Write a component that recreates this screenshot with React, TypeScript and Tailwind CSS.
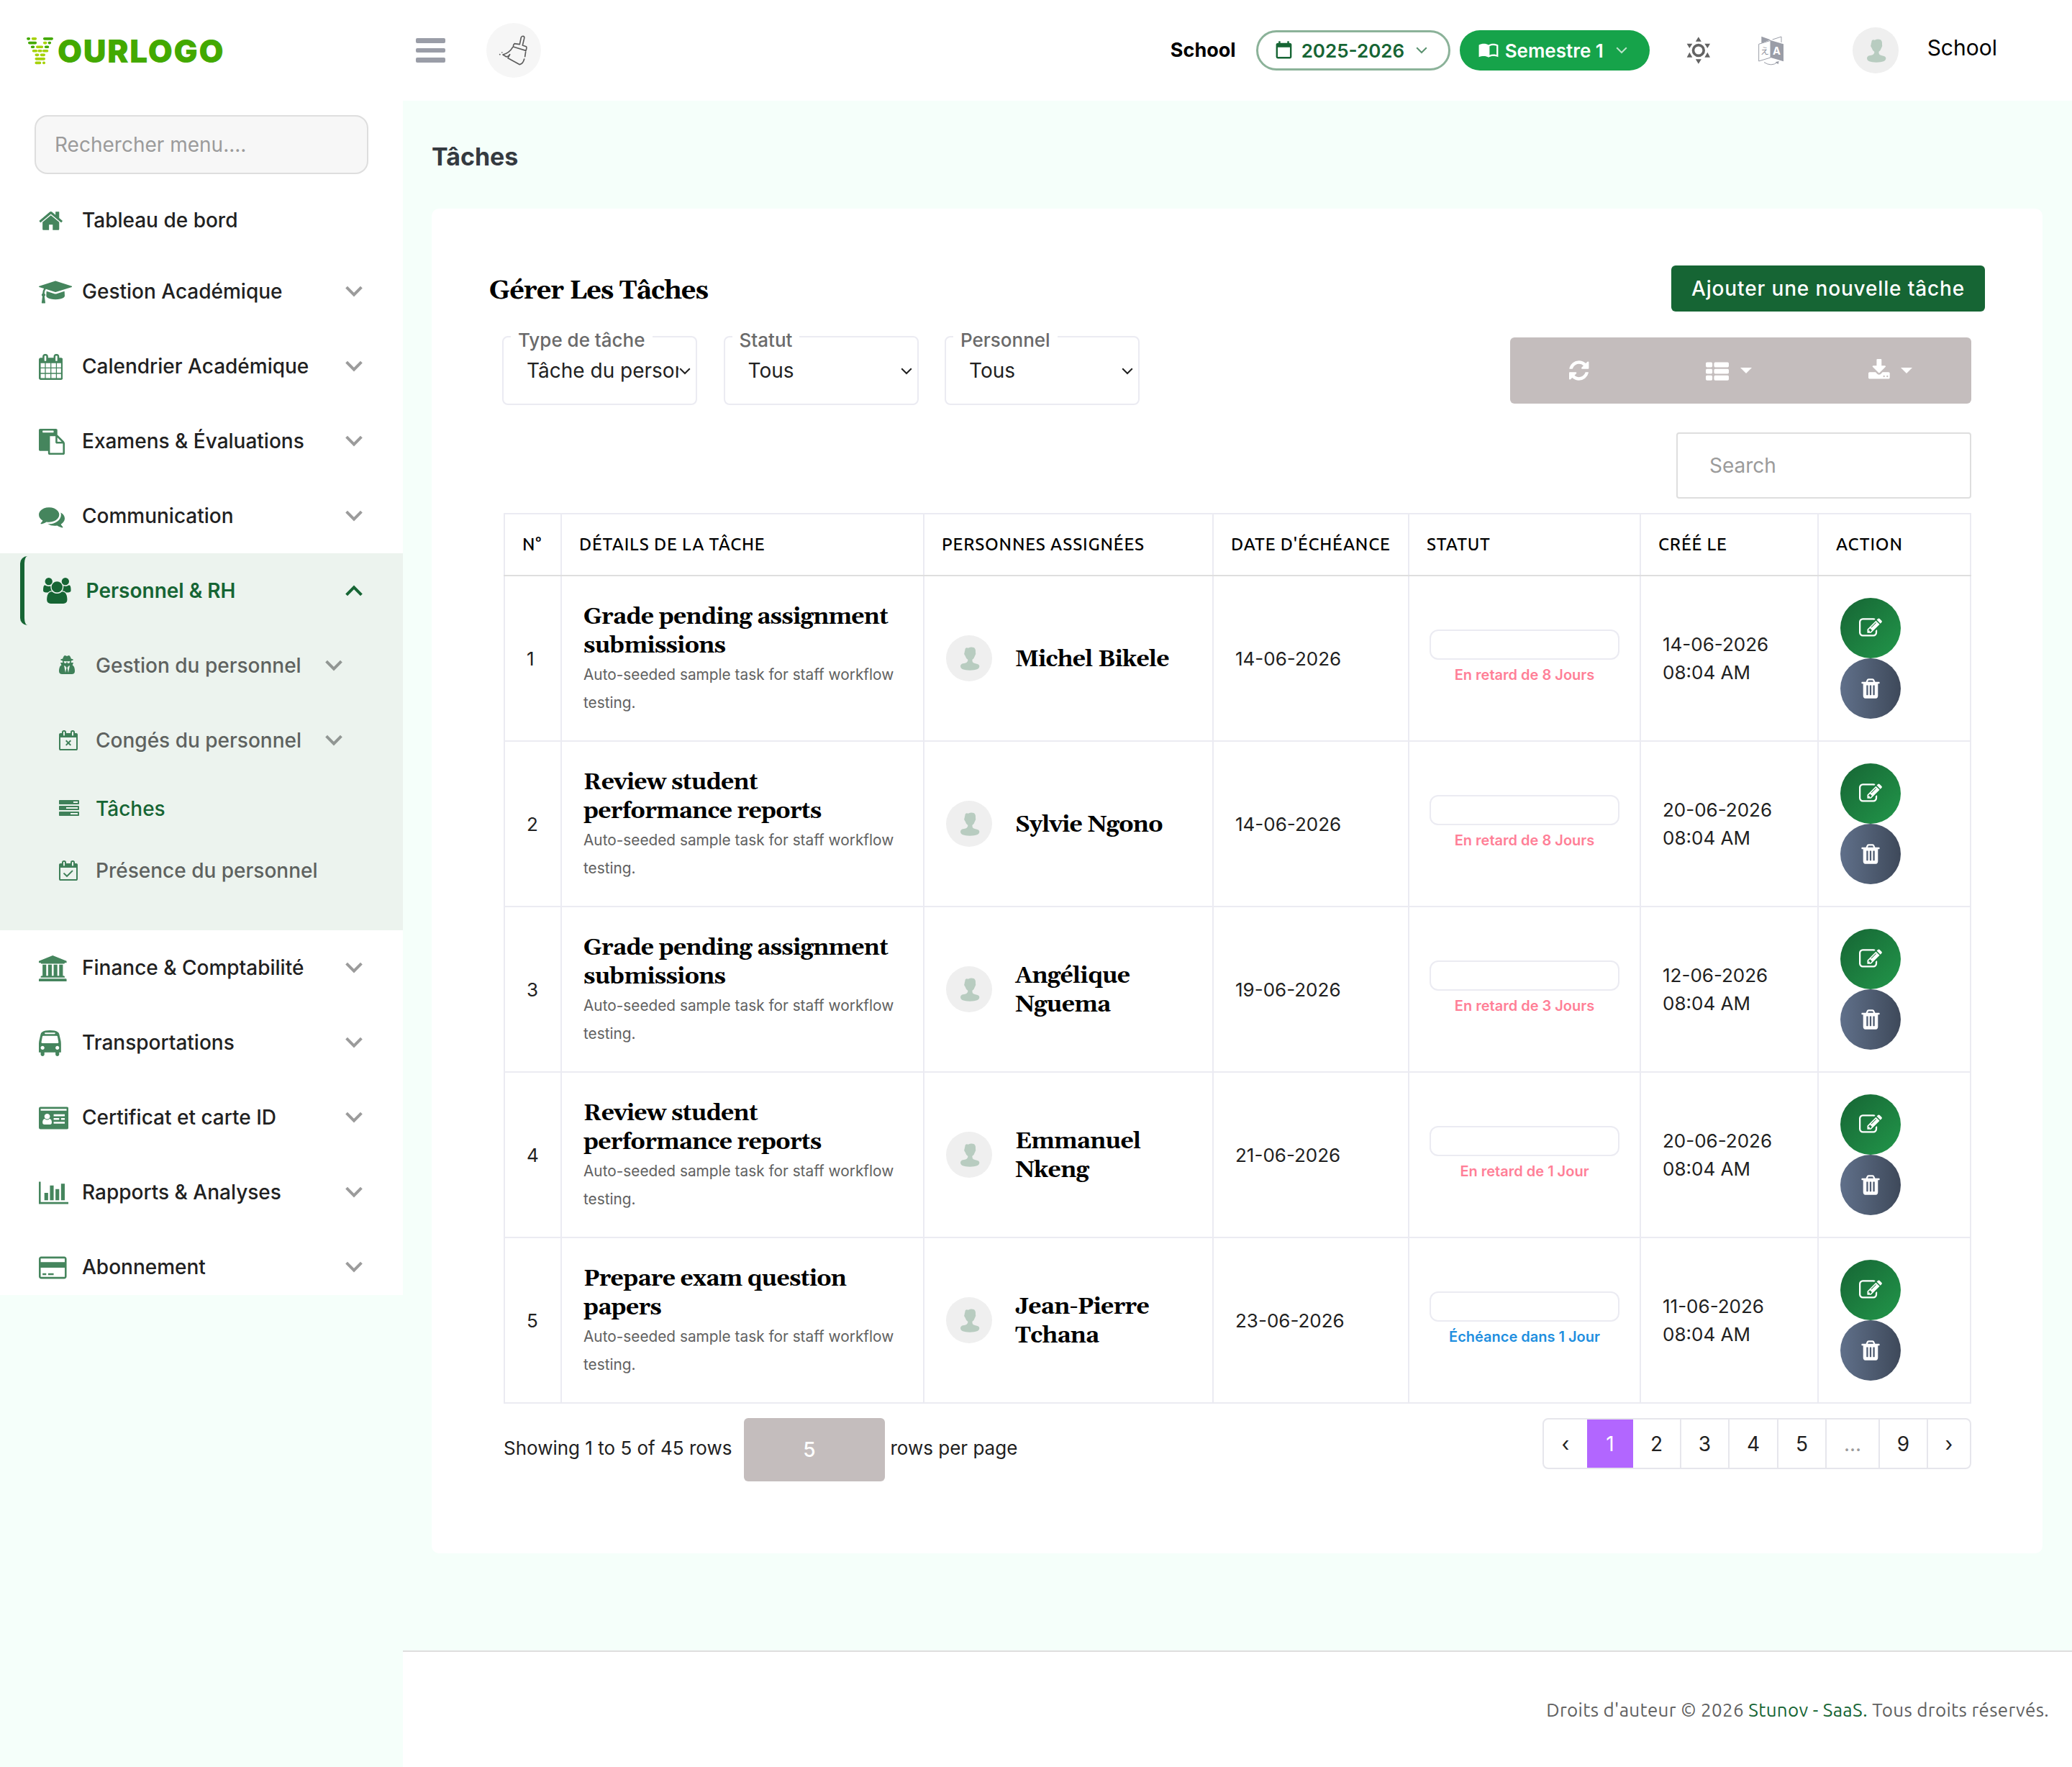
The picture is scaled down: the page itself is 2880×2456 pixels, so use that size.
import React from 'react';

const FRAME =
  'M192 1664h1408v-1024h-1408v1024zm384-1216v-288q0-14-9-23t-23-9h-64q-14 0-23 9t-9 23v288q0 14 9 23t23 9h64q14 0 23-9t9-23zm768 0v-288q0-14-9-23t-23-9h-64q-14 0-23 9t-9 23v288q0 14 9 23t23 9h64q14 0 23-9t9-23zm384-64v1280q0 52-38 90t-90 38h-1408q-52 0-90-38t-38-90v-1280q0-52 38-90t90-38h128v-96q0-66 47-113t113-47h64q66 0 113 47t47 113v96h384v-96q0-66 47-113t113-47h64q66 0 113 47t47 113v96h128q52 0 90 38t38 90z';

// [viewBox x, viewBox width, path]
const icons: Record<string, [number, number, string]> = {
  home: [64, 1664, 'M1472 992v480q0 26-19 45t-45 19h-384v-384h-256v384h-384q-26 0-45-19t-19-45v-480q0-1 .5-3t.5-3l575-474 575 474q1 2 1 6zm223-69l-62 74q-8 9-21 11h-3q-13 0-21-7l-692-577-692 577q-12 8-24 7-13-2-21-11l-62-74q-8-10-7-23.5t11-21.5l719-599q32-26 76-26t76 26l244 204v-195q0-14 9-23t23-9h192q14 0 23 9t9 23v408l219 182q10 8 11 21.5t-7 23.5z'],
  cap: [0, 2304, 'M1774 836l18 316q4 69-82 128t-235 93.5-323 34.5-323-34.5-235-93.5-82-128l18-316 574 181q22 7 48 7t48-7zm530-324q0 23-22 31l-1120 352q-4 1-10 1t-10-1l-652-206q-43 34-71 111.5t-34 178.5q63 36 63 109 0 69-58 107l58 433q2 14-8 25-9 11-24 11h-192q-15 0-24-11-10-11-8-25l58-433q-58-38-58-107 0-73 65-111 11-207 98-330l-333-104q-22-8-22-31t22-31l1120-352q4-1 10-1t10 1l1120 352q22 8 22 31z'],
  calendar: [64, 1664, 'M192 1664h288v-288h-288v288zm352 0h320v-288h-320v288zm-352-352h288v-320h-288v320zm352 0h320v-320h-320v320zm-352-384h288v-288h-288v288zm736 736h320v-288h-320v288zm-384-736h320v-288h-320v288zm768 736h288v-288h-288v288zm-384-352h320v-320h-320v320zm-352-864v-288q0-13-9.5-22.5t-22.5-9.5h-64q-13 0-22.5 9.5t-9.5 22.5v288q0 13 9.5 22.5t22.5 9.5h64q13 0 22.5-9.5t9.5-22.5zm736 864h288v-320h-288v320zm-384-384h320v-288h-320v288zm384 0h288v-288h-288v288zm32-480v-288q0-13-9.5-22.5t-22.5-9.5h-64q-13 0-22.5 9.5t-9.5 22.5v288q0 13 9.5 22.5t22.5 9.5h64q13 0 22.5-9.5t9.5-22.5zm384-64v1280q0 52-38 90t-90 38h-1408q-52 0-90-38t-38-90v-1280q0-52 38-90t90-38h128v-96q0-66 47-113t113-47h64q66 0 113 47t47 113v96h384v-96q0-66 47-113t113-47h64q66 0 113 47t47 113v96h128q52 0 90 38t38 90z'],
  paste: [0, 1792, 'M768 1664h896v-640h-416q-40 0-68-28t-28-68v-416h-384v1152zm256-1440v-64q0-13-9.5-22.5t-22.5-9.5h-704q-13 0-22.5 9.5t-9.5 22.5v64q0 13 9.5 22.5t22.5 9.5h704q13 0 22.5-9.5t9.5-22.5zm256 672h299l-299-299v299zm512 128v672q0 40-28 68t-68 28h-960q-40 0-68-28t-28-68v-160h-544q-40 0-68-28t-28-68v-1344q0-40 28-68t68-28h1088q40 0 68 28t28 68v328q21 13 36 28l408 408q28 28 48 76t20 88z'],
  comments: [0, 1792, 'M1408 768q0 139-94 257t-256.5 186.5-353.5 68.5q-86 0-176-16-124 88-278 128-36 9-86 16h-3q-11 0-20.5-8t-11.5-21q-1-3-1-6.5t.5-6.5 2-6l2.5-5t3.5-5.5 4-5 4.5-5 4-4.5q5-6 23-25t26-29.5 22.5-29 25-38.5 20.5-44q-124-72-195-177t-71-224q0-139 94-257t256.5-186.5 353.5-68.5 353.5 68.5 256.5 186.5 94 257zm384 256q0 120-71 224.5t-195 176.5q10 24 20.5 44t25 38.5 22.5 29 26 29.5 23 25q1 1 4 4.5t4.5 5 4 5 3.5 5.5l2.5 5t2 6 .5 6.5-1 6.5q-3 14-13 22t-22 7q-50-7-86-16-154-40-278-128-90 16-176 16-271 0-472-132 58 4 88 4 161 0 309-45t264-129q125-92 192-212t67-254q0-77-23-152 129 71 204 178t75 230z'],
  users: [0, 1920, 'M593 896q-162 5-265 128h-134q-82 0-138-40.5t-56-118.5q0-353 124-353 6 0 43.5 21t97.5 42.5 119 21.5q67 0 133-23-5 37-5 66 0 143 81 264zm1071 637q0 120-73 189.5t-194 69.5h-874q-121 0-194-69.5t-73-189.5q0-53 3.5-103.5t14-109 26.5-108.5 43-97.5 62-81 85.5-53.5 111.5-20q10 0 43 21.5t73 48 107 48 135 21.5 135-21.5 107-48 73-48 43-21.5q61 0 111.5 20t85.5 53.5 62 81 43 97.5 26.5 108.5 14 109 3.5 103.5zm-1024-1277q0 106-75 181t-181 75-181-75-75-181 75-181 181-75 181 75 75 181zm704 384q0 159-112.5 271.5t-271.5 112.5-271.5-112.5-112.5-271.5 112.5-271.5 271.5-112.5 271.5 112.5 112.5 271.5zm576 225q0 78-56 118.5t-138 40.5h-134q-103-123-265-128 81-121 81-264 0-29-5-66 66 23 133 23 59 0 119-21.5t97.5-42.5 43.5-21q124 0 124 353zm-128-609q0 106-75 181t-181 75-181-75-75-181 75-181 181-75 181 75 75 181z'],
  secret: [0, 1408, 'M576 1536l96-448-96-128-128-64zm256 0l128-640-128 64-96 128zm160-1010q-2-4-4-6-10-8-96-8-70 0-167 19-7 2-21 2t-21-2q-97-19-167-19-86 0-96 8-2 2-4 6 2 18 4 27 2 3 7.5 6.5t7.5 10.5q2 4 7.5 20.5t7 20.5 7.5 17 8.5 17 9 14 12 13.5 14 9.5 17.5 8 20.5 4 24.5 2q36 0 59-12.5t32.5-30 14.5-34.5 11.5-29.5 17.5-12.5h12q11 0 17.5 12.5t11.5 29.5 14.5 34.5 32.5 30 59 12.5q13 0 24.5-2t20.5-4 17.5-8 14-9.5 12-13.5 9-14 8.5-17 7.5-17 7-20.5 7.5-20.5q2-7 7.5-10.5t7.5-6.5q2-9 4-27zm416 879q0 121-73 190t-194 69h-874q-121 0-194-69t-73-190q0-61 4.5-118t19-125.5 37.5-123.5 63.5-103.5 93.5-74.5l-90-220h214q-22-64-22-128 0-12 2-32-194-40-194-96 0-57 210-99 17-62 51.5-134t70.5-114q32-37 76-37 30 0 84 31t84 31 84-31 84-31q44 0 76 37 36 42 70.5 114t51.5 134q210 42 210 99 0 56-194 96 7 81-20 160h214l-82 225q63 33 107.5 96.5t65.5 143.5 29 151.5 8 148.5z'],
  leave: [64, 1664, FRAME + 'M730 870l166 166 166-166 90 90-166 166 166 166-90 90-166-166-166 166-90-90 166-166-166-166z'],
  presence: [64, 1664, FRAME + 'M1303 964l-512 512q-10 9-23 9t-23-9l-288-288q-9-10-9-23t9-22l46-46q9-9 22-9t23 9l220 220 444-444q10-9 23-9t22 9l46 46q9 9 9 22t-9 23z'],
  tasks: [0, 1792, 'M1024 1408h640v-128h-640v128zm-384-512h1024v-128h-1024v128zm640-512h384v-128h-384v128zm512 832v256q0 26-19 45t-45 19h-1664q-26 0-45-19t-19-45v-256q0-26 19-45t45-19h1664q26 0 45 19t19 45zm0-512v256q0 26-19 45t-45 19h-1664q-26 0-45-19t-19-45v-256q0-26 19-45t45-19h1664q26 0 45 19t19 45zm0-512v256q0 26-19 45t-45 19h-1664q-26 0-45-19t-19-45v-256q0-26 19-45t45-19h1664q26 0 45 19t19 45z'],
  bank: [0, 1920, 'M960 0l960 384v128h-128q0 26-20.5 45t-48.5 19h-1526q-28 0-48.5-19t-20.5-45h-128v-128zm-704 640h256v768h128v-768h256v768h128v-768h256v768h128v-768h256v768h59q28 0 48.5 19t20.5 45v64h-1664v-64q0-26 20.5-45t48.5-19h59v-768zm1595 960q28 0 48.5 19t20.5 45v128h-1920v-128q0-26 20.5-45t48.5-19h1782z'],
  bus: [0, 1536, 'M384 1216q0-53-37.5-90.5t-90.5-37.5-90.5 37.5-37.5 90.5 37.5 90.5 90.5 37.5 90.5-37.5 37.5-90.5zm1024 0q0-53-37.5-90.5t-90.5-37.5-90.5 37.5-37.5 90.5 37.5 90.5 90.5 37.5 90.5-37.5 37.5-90.5zm-46-396l-72-384q-5-23-22.5-37.5t-40.5-14.5h-918q-23 0-40.5 14.5t-22.5 37.5l-72 384q-5 30 14 53t49 23h1062q30 0 49-23t14-53zm-226-612q0-20-14-34t-34-14h-640q-20 0-34 14t-14 34 14 34 34 14h640q20 0 34-14t14-34zm400 725v603h-128v128q0 53-37.5 90.5t-90.5 37.5-90.5-37.5-37.5-90.5v-128h-768v128q0 53-37.5 90.5t-90.5 37.5-90.5-37.5-37.5-90.5v-128h-128v-603q0-112 25-223l103-454q9-78 97.5-137t230-89 312.5-30 312.5 30 230 89 97.5 137l105 454q23 102 23 223z'],
  idcard: [0, 2048, 'M112 128h1824q112 0 112 112v1312q0 112-112 112h-1824q-112 0-112-112v-1312q0-112 112-112zM128 256v128h1792v-128zM1024 640v128h768v-128zM1024 896v128h384v-128zM1536 896v128h256v-128zM1024 1152v128h768v-128zM576 592q-80 0-137 56t-57 136 57 136 137 56 137-56 57-136-57-136-137-56zM420 944q-164 20-164 250 0 150 130 150h380q130 0 130-150 0-230-164-250-60 80-156 80t-156-80z'],
  chart: [0, 2048, 'M640 896v512h-256v-512h256zm384-512v1024h-256v-1024h256zm1024 1152v128h-2048v-1536h128v1408h1920zm-640-896v768h-256v-768h256zm384-384v1152h-256v-1152h256z'],
  card: [0, 1920, 'M1760 128q66 0 113 47t47 113v1216q0 66-47 113t-113 47h-1600q-66 0-113-47t-47-113v-1216q0-66 47-113t113-47h1600zm-1600 128q-13 0-22.5 9.5t-9.5 22.5v224h1664v-224q0-13-9.5-22.5t-22.5-9.5h-1600zm1600 1280q13 0 22.5-9.5t9.5-22.5v-608h-1664v608q0 13 9.5 22.5t22.5 9.5h1600zm-1504-128v-128h256v128h-256zm384 0v-128h384v128h-384z'],
  edit: [0, 1792, 'M888 1184l116-116-152-152-116 116v56h96v96h56zm440-720q-16-16-33 1l-350 350q-17 17-1 33t33-1l350-350q17-17 1-33zm80 594v190q0 119-84.5 203.5t-203.5 84.5h-832q-119 0-203.5-84.5t-84.5-203.5v-832q0-119 84.5-203.5t203.5-84.5h832q63 0 117 25 15 7 18 23 3 17-9 29l-49 49q-14 14-32 8-23-6-45-6h-832q-66 0-113 47t-47 113v832q0 66 47 113t113 47h832q66 0 113-47t47-113v-126q0-13 9-22l64-64q15-15 35-7t20 29zm-96-738l288 288-672 672h-288v-288zm444 132l-92 92-288-288 92-92q28-28 68-28t68 28l152 152q28 28 28 68t-28 68z'],
  trash: [0, 1792, 'M704 1376v-704q0-14-9-23t-23-9h-64q-14 0-23 9t-9 23v704q0 14 9 23t23 9h64q14 0 23-9t9-23zm256 0v-704q0-14-9-23t-23-9h-64q-14 0-23 9t-9 23v704q0 14 9 23t23 9h64q14 0 23-9t9-23zm256 0v-704q0-14-9-23t-23-9h-64q-14 0-23 9t-9 23v704q0 14 9 23t23 9h64q14 0 23-9t9-23zm-544-992h448l-48-117q-7-9-17-11h-317q-10 2-17 11zm928 32v64q0 14-9 23t-23 9h-96v948q0 83-47 143.5t-113 60.5h-832q-66 0-113-58.5t-47-141.5v-952h-96q-14 0-23-9t-9-23v-64q0-14 9-23t23-9h309l70-167q15-37 54-63t79-26h320q40 0 79 26t54 63l70 167h309q14 0 23 9t9 23z'],
  refresh: [128, 1536, 'M1639 1056q0 5-1 7-64 268-268 434.5t-478 166.5q-146 0-282.5-55t-243.5-157l-129 129q-19 19-45 19t-45-19-19-45v-448q0-26 19-45t45-19h448q26 0 45 19t19 45-19 45l-137 137q71 66 161 102t187 36q134 0 250-65t186-179q11-17 53-117 8-23 30-23h192q13 0 22.5 9.5t9.5 22.5zm25-800v448q0 26-19 45t-45 19h-448q-26 0-45-19t-19-45 19-45l138-138q-148-137-349-137-134 0-250 65t-186 179q-11 17-53 117-8 23-30 23h-199q-13 0-22.5-9.5t-9.5-22.5v-7q65-268 270-434.5t480-166.5q146 0 284 55.5t245 156.5l130-129q19-19 45-19t45 19 19 45z'],
  list: [0, 1792, 'M96 256h320q96 0 96 96v192q0 96-96 96h-320q-96 0-96-96v-192q0-96 96-96zM96 768h320q96 0 96 96v192q0 96-96 96h-320q-96 0-96-96v-192q0-96 96-96zM96 1280h320q96 0 96 96v192q0 96-96 96h-320q-96 0-96-96v-192q0-96 96-96zM736 256h960q96 0 96 96v192q0 96-96 96h-960q-96 0-96-96v-192q0-96 96-96zM736 768h960q96 0 96 96v192q0 96-96 96h-960q-96 0-96-96v-192q0-96 96-96zM736 1280h960q96 0 96 96v192q0 96-96 96h-960q-96 0-96-96v-192q0-96 96-96z'],
  download: [64, 1664, 'M1344 1344q0-26-19-45t-45-19-45 19-19 45 19 45 45 19 45-19 19-45zm256 0q0-26-19-45t-45-19-45 19-19 45 19 45 45 19 45-19 19-45zm128-224v320q0 40-28 68t-68 28h-1472q-40 0-68-28t-28-68v-320q0-40 28-68t68-28h465l135 136q58 56 136 56t136-56l136-136h464q40 0 68 28t28 68zm-325-569q17 41-14 70l-448 448q-18 19-45 19t-45-19l-448-448q-31-29-14-70 17-39 59-39h256v-448q0-26 19-45t45-19h256q26 0 45 19t19 45v448h256q42 0 59 39z'],
};

const Icon: React.FC<{ name: string; size: number; className?: string }> = ({ name, size, className }) => {
  const [x, w, d] = icons[name];
  return (
    <svg className={className} width={(w * size) / 1792} height={size} viewBox={`${x} 0 ${w} 1792`} fill="currentColor" fillRule="evenodd">
      <path d={d} />
    </svg>
  );
};

const Chevron: React.FC<{ up?: boolean; className?: string }> = ({ up, className }) => (
  <svg className={className} width="24" height="16" viewBox="0 0 24 16" fill="none" stroke="currentColor" strokeWidth="4">
    <path d={up ? 'M1.6 13.8 12 3.4l10.4 10.4' : 'M1.6 2.2 12 12.6 22.4 2.2'} />
  </svg>
);

const SmallChevron: React.FC<{ className?: string }> = ({ className }) => (
  <svg className={className} width="16" height="10" viewBox="0 0 16 10" fill="none" stroke="currentColor" strokeWidth="2">
    <path d="M1.2 1.2 8 8l6.8-6.8" />
  </svg>
);

const Caret = () => (
  <svg width="16" height="8" viewBox="0 0 16 8" fill="currentColor">
    <path d="M0 0h16L8 8z" />
  </svg>
);

const Avatar = () => (
  <svg className="shrink-0" width="64" height="64" viewBox="732 54 192 192">
    <circle cx="828" cy="150" r="96" fill="#efefef" />
    <path
      fill="#b8ccc0"
      d="M811 116q1-13 13-9 13-6 23-2 9 3 8 20 3 8-3 15-3 11-11 16 0 9 5 13 5 2 14 4 11 3 11 10 0 17-40 17-39 0-39-17 0-8 10-11 10-2 15-4 7-4 6-12-8-6-11-16-7-8-3-14 0-5 2-10z"
    />
  </svg>
);

const Logo = () => (
  <div className="flex items-start">
    <svg width="40" height="40" viewBox="36 51 40 42" strokeWidth="3.8" strokeLinecap="round">
      <path stroke="#43a900" d="M38 54h1.500M62 54h11M40 60h9M69 60h1M44 66h2M64 66h3" />
      <path stroke="#a6d20a" d="M45 54h4M62 60h2M51.500 66h7M46 71.800h4M54 71.800h3M61 71.800h5M50 77.600h2.500M57.500 77.600h4M50 83.400h11.500M50 89.200h5.500M61 89.200h.5" />
    </svg>
    <span className="ml-[4px] text-[44px] leading-[41px] font-black tracking-[1.7px] text-[#43a900]">OURLOGO</span>
  </div>
);

type Item = { icon: string; label: string; open?: boolean; plain?: boolean };

const top: Item[] = [
  { icon: 'cap', label: 'Gestion Académique' },
  { icon: 'calendar', label: 'Calendrier Académique' },
  { icon: 'paste', label: 'Examens & Évaluations' },
  { icon: 'comments', label: 'Communication' },
];

const bottom: Item[] = [
  { icon: 'bank', label: 'Finance & Comptabilité' },
  { icon: 'bus', label: 'Transportations' },
  { icon: 'idcard', label: 'Certificat et carte ID' },
  { icon: 'chart', label: 'Rapports & Analyses' },
  { icon: 'card', label: 'Abonnement' },
];

const MenuItem: React.FC<{ item: Item }> = ({ item }) => (
  <div className="flex h-[104px] items-center pl-[54px] pr-[56px] text-[28px] font-medium text-[#212121]">
    <div className="w-[60px] pt-[2px] text-[#45855d]">
      <Icon name={item.icon} size={36} />
    </div>
    <span className="flex-1">{item.label}</span>
    <Chevron className="text-[#9b9b9b]" />
  </div>
);

const SubItem: React.FC<{ item: Item }> = ({ item }) => (
  <div className={`flex items-center pl-[82px] pr-[84px] text-[28px] font-medium ${item.plain ? 'h-[86px]' : 'h-[104px]'} ${item.open ? 'text-[#166534]' : 'text-[#5e625f]'}`}>
    <div className="w-[51px] text-[#3f8059]">
      <Icon name={item.icon} size={28} />
    </div>
    <span className="flex-1 whitespace-nowrap">{item.label}</span>
    {!item.plain && <Chevron className="text-[#919693]" />}
  </div>
);

const Sidebar = () => (
  <aside className="h-[1800px] w-[560px] shrink-0 bg-white">
    <div className="flex h-[140px] items-start pl-[36px] pt-[51px]">
      <Logo />
    </div>
    <div className="mt-5 ml-12 flex h-[82px] w-[464px] items-center rounded-[18px] border-2 border-[#dedede] bg-[#f7f7f7] pl-[26px] text-[28px] text-[#9b9b9b]">
      Rechercher menu....
    </div>
    <div className="mt-[18px] flex h-[93px] items-center pb-[2px] pl-[54px] text-[28px] font-medium text-[#212121]">
      <div className="w-[60px] pt-[2px] text-[#45855d]">
        <Icon name="home" size={36} />
      </div>
      Tableau de bord
    </div>
    {top.map(item => (
      <MenuItem key={item.label} item={item} />
    ))}
    <div className="h-[524px] bg-[#ecf3ee]">
      <div className="flex h-[104px] items-center pl-7 text-[28px] font-semibold text-[#166534]">
        <div className="h-[96px] w-8 rounded-l-[10px] border-l-[6px] border-[#166534]" />
        <Icon name="users" size={36} />
        <span className="ml-[21px] w-[360px]">Personnel &amp; RH</span>
        <Chevron up />
      </div>
      <SubItem item={{ icon: 'secret', label: 'Gestion du personnel' }} />
      <SubItem item={{ icon: 'leave', label: 'Congés du personnel' }} />
      <SubItem item={{ icon: 'tasks', label: 'Tâches', open: true, plain: true }} />
      <SubItem item={{ icon: 'presence', label: 'Présence du personnel', plain: true }} />
    </div>
    {bottom.map(item => (
      <MenuItem key={item.label} item={item} />
    ))}
  </aside>
);

const Header = () => (
  <header className="flex h-[140px] items-center bg-white pl-[18px] pr-[104px]">
    <div className="flex w-[41px] flex-col gap-[7px]">
      <div className="h-[6.500px] rounded-[2px] bg-[#9a9da7]" />
      <div className="h-[6.500px] rounded-[2px] bg-[#9a9da7]" />
      <div className="h-[6.500px] rounded-[2px] bg-[#9a9da7]" />
    </div>
    <svg className="ml-[57px]" width="76" height="76" viewBox="48 36 228 228" fill="none" stroke="#5c5c5c" strokeWidth="5" strokeLinecap="round" strokeLinejoin="round">
      <circle cx="162" cy="150" r="114" fill="#f6f6f6" stroke="none" />
      <path d="M187 125l6-29q3-6 9-5 6 2 4 9l-7 29M187 125l-22-3q-5 3-5 13l53 16q5-14 1-17l-15-5M158 137q-14 24-41 31l15 9q9-2 14-10-6 11-8 15l49 27q14-3 19-23M209 176l3-20M104 167h.5M113 159h.5" />
    </svg>
    <span className="ml-auto text-[27px] font-bold text-black">School</span>
    <div className="ml-[28px] flex h-[56px] w-[270px] items-center rounded-full border-[3px] border-[#8bb299] pl-[21px] text-[26px] font-semibold text-[#166534]">
      <svg width="29" height="29" viewBox="0 0 24 24" fill="currentColor">
        <path d="M19 19H5V8h14M16 1v2H8V1H6v2H5c-1.110 0-2 .89-2 2v14a2 2 0 0 0 2 2h14a2 2 0 0 0 2-2V5c0-1.110-.9-2-2-2h-1V1" />
      </svg>
      <span className="ml-[10px] w-[159px]">2025-2026</span>
      <SmallChevron className="opacity-70" />
    </div>
    <div className="ml-[13px] flex h-[56px] w-[264px] items-center rounded-full bg-[#16a34a] pl-[26px] text-[26px] font-semibold text-white">
      <svg width="28" height="28" viewBox="0 0 24 24" fill="currentColor">
        <path d="M12 5.500C10.500 4.400 8.500 4 6.500 4S2 4.400 .5 5.500V20c1.500-.9 4-1.200 6-1.200s4 .5 5.500 1.500c1.500-1 3.500-1.500 5.500-1.500s4.500.3 6 1.200V5.500C22 4.400 19.500 4 17.500 4s-4 .4-5.500 1.500zm9.500 11.800c-1.200-.4-2.700-.5-4-.5-1.500 0-3 .3-4.300.9V7c1.300-.7 2.800-1 4.300-1 1.300 0 2.800.2 4 .6z" fillRule="evenodd" />
      </svg>
      <span className="ml-[9px] w-[154px]">Semestre 1</span>
      <SmallChevron className="opacity-70" />
    </div>
    <svg className="ml-[51px]" width="34" height="38" viewBox="39 91 102 114" fill="#636363">
      <circle cx="89.500" cy="148" r="22" fill="none" stroke="#636363" strokeWidth="11" />
      <path d="M89.500 92l12 19h-24zM89.500 204l12-19h-24zM41 120h23l-12 19zM138 120h-23l12 19zM41 177h23l-12-21zM138 177h-23l12-21z" />
    </svg>
    <svg className="ml-[66px]" width="36" height="41" viewBox="341 88 108 123" fill="none" stroke="#9a9da7" strokeWidth="3">
      <path d="M354 90l38 14-38 14z" fill="#9a9da7" stroke="none" />
      <path d="M400 103l37-12v24M343 122l49-15v71l-49 15zM365 198q30 19 56 0" />
      <path d="M392 106l54 16v72l-54-16z" fill="#9a9da7" stroke="none" />
      <path d="M412 197l15-4-3 13z" fill="#9a9da7" stroke="none" />
      <text x="401" y="167" fontSize="44" fontWeight="700" fill="#fff" stroke="none" fontFamily="Inter">A</text>
      <text x="350" y="166" fontSize="36" fill="#8a8d97" stroke="none" fontFamily="Noto Sans CJK JP">え</text>
    </svg>
    <div className="ml-[95px]">
      <Avatar />
    </div>
    <span className="ml-[40px] pb-[7px] text-[30px] text-black">School</span>
  </header>
);

const Select: React.FC<{ label: string; value: string }> = ({ label, value }) => (
  <div className="relative flex h-[96px] w-[271px] rounded-[8px] border-[2.500px] border-[#ebebf2] pl-[32px]">
    <span className="absolute -top-[14px] left-[10px] bg-white px-[10px] text-[26px] leading-[36px] font-medium text-[#6a6a6a]">{label}</span>
    <span className="mt-[24px] h-[44px] w-[211px] overflow-hidden text-[28px] leading-[44px] whitespace-nowrap text-[#212121]">{value}</span>
    <SmallChevron className="mt-[42px] ml-px shrink-0 text-[#212121]" />
  </div>
);

const tasks = [
  { id: 1, title: ['Grade pending assignment', 'submissions'], name: ['Michel Bikele'], due: '14-06-2026', late: 'En retard de 8 Jours', created: '14-06-2026' },
  { id: 2, title: ['Review student', 'performance reports'], name: ['Sylvie Ngono'], due: '14-06-2026', late: 'En retard de 8 Jours', created: '20-06-2026' },
  { id: 3, title: ['Grade pending assignment', 'submissions'], name: ['Angélique', 'Nguema'], due: '19-06-2026', late: 'En retard de 3 Jours', created: '12-06-2026' },
  { id: 4, title: ['Review student', 'performance reports'], name: ['Emmanuel', 'Nkeng'], due: '21-06-2026', late: 'En retard de 1 Jour', created: '20-06-2026' },
  { id: 5, title: ['Prepare exam question', 'papers'], name: ['Jean-Pierre', 'Tchana'], due: '23-06-2026', soon: 'Échéance dans 1 Jour', created: '11-06-2026' },
];

const serif = "font-[Gelasio,Georgia,'DejaVu_Serif',serif]";
const cell = 'border-2 border-[#ebebf2] pl-[30px]';

const TaskTable = () => (
  <table className="w-[2040px] table-fixed border-collapse text-[26px] text-[#212121]">
    <colgroup>
      <col className="w-[79px]" />
      <col className="w-[504px]" />
      <col className="w-[402px]" />
      <col className="w-[272px]" />
      <col className="w-[322px]" />
      <col className="w-[247px]" />
      <col className="w-[212px]" />
    </colgroup>
    <thead>
      <tr className="h-[86px] text-left font-[Ubuntu,'Noto_Sans',sans-serif] text-[24px] text-black">
        {['N°', 'DÉTAILS DE LA TÂCHE', 'PERSONNES ASSIGNÉES', "DATE D'ÉCHÉANCE", 'STATUT', 'CRÉÉ LE', 'ACTION'].map(h => (
          <th key={h} className="border-2 border-[#ebebf2] border-b-[#dedede] pl-[24px] font-medium tracking-[0.8px] whitespace-nowrap">{h}</th>
        ))}
      </tr>
    </thead>
    <tbody>
      {tasks.map(task => (
        <tr key={task.id} className="h-[230px]">
          <td className={cell}>{task.id}</td>
          <td className={cell}>
            <div className={`${serif} pt-[4px] text-[32px] leading-[40px] font-bold tracking-[-0.75px] whitespace-nowrap text-black`}>
              {task.title.map(line => (
                <div key={line}>{line}</div>
              ))}
            </div>
            <div className="text-[20.800px] leading-[39px] text-[#616161]">
              Auto-seeded sample task for staff workflow
              <br />
              testing.
            </div>
          </td>
          <td className={cell}>
            <div className="flex items-center gap-8">
              <Avatar />
              <div className={`${serif} pt-[3px] text-[32px] leading-[40px] font-bold tracking-[-0.75px] text-black`}>
                {task.name.map(line => (
                  <div key={line}>{line}</div>
                ))}
              </div>
            </div>
          </td>
          <td className={cell}>{task.due}</td>
          <td className="border-2 border-[#ebebf2]">
            <div className="flex flex-col items-center">
              <div className="h-[42px] w-[264px] rounded-[12px] border-2 border-[#ebebf2]" />
              <div className={`mt-[4px] -mb-px text-[20px] leading-[35px] font-semibold ${task.soon ? 'text-[#1f8fe0]' : 'text-[#ff7f97]'}`}>{task.soon || task.late}</div>
            </div>
          </td>
          <td className={`${cell} leading-[39px]`}>
            {task.created}
            <br />
            08:04 AM
          </td>
          <td className={cell}>
            <button className="flex size-[84px] items-center justify-center rounded-full bg-[linear-gradient(135deg,#166534,#22964a)] text-white">
              <Icon name="edit" size={32} />
            </button>
            <button className="flex size-[84px] items-center justify-center rounded-full bg-[linear-gradient(90deg,#60708a,#3e495a)] text-white">
              <Icon name="trash" size={32} />
            </button>
          </td>
        </tr>
      ))}
    </tbody>
  </table>
);

const pages = [
  { label: '‹', w: 'w-[60px]' },
  { label: '1', w: 'w-[64px]' },
  { label: '2', w: 'w-[65px]' },
  { label: '3', w: 'w-[67px]' },
  { label: '4', w: 'w-[68px]' },
  { label: '5', w: 'w-[67px]' },
  { label: '...', w: 'w-[74px]' },
  { label: '9', w: 'w-[67px]' },
  { label: '›', w: 'w-[60px]' },
];

const App: React.FC = () => {
  return (
    <div className="flex h-[2456px] w-[2880px] bg-[#f5fffa] font-[Inter,sans-serif]">
      <Sidebar />
      <div className="flex flex-1 flex-col">
        <Header />
        <h4 className="mt-[57px] ml-[40px] text-[34px] leading-[42px] font-bold text-[#343a40]">Tâches</h4>
        <main className="mt-[51px] ml-[40px] h-[1869px] w-[2239px] rounded-[10px] bg-white px-[80px] pt-[79px]">
          <div className="flex h-16 items-center justify-between">
            <h4 className={`${serif} pt-[7px] text-[36px] font-bold tracking-[-0.9px] text-black`}>Gérer Les Tâches</h4>
            <button className="h-16 w-[436px] rounded-[6px] bg-[#166534] text-[28px] font-medium tracking-[0.85px] text-white">Ajouter une nouvelle tâche</button>
          </div>
          <div className="mt-[34px] mr-[19px] ml-[18px] flex justify-between">
            <div className="flex gap-[36.500px]">
              <Select label="Type de tâche" value="Tâche du personnel" />
              <Select label="Statut" value="Tous" />
              <Select label="Personnel" value="Tous" />
            </div>
            <div className="mt-[2px] flex h-[92px] w-[641px] rounded-[6px] bg-[#c4bdbd] text-white">
              <button className="flex w-[192px] items-center justify-center">
                <Icon name="refresh" size={32} />
              </button>
              <button className="flex w-[224px] items-center justify-center gap-4">
                <Icon name="list" size={32} />
                <Caret />
              </button>
              <button className="flex flex-1 items-center justify-center gap-[15px]">
                <Icon name="download" size={32} />
                <Caret />
              </button>
            </div>
          </div>
          <div className="mt-[38px] mr-[19px] ml-auto flex h-[92px] w-[410px] items-center rounded-[4px] border-2 border-[#dedede] pl-[44px] text-[28px] text-[#9b9b9b]">Search</div>
          <div className="mt-[20px] ml-[20px]">
            <TaskTable />
          </div>
          <div className="mt-[20px] mr-[19px] ml-[20px] flex items-start text-[26px] text-[#212121]">
            <div className="flex h-[88px] items-center">
              <span className="pb-[5px]">Showing 1 to 5 of 45 rows</span>
              <button className="ml-[17px] flex h-[88px] w-[196px] items-center justify-center rounded-[6px] bg-[#c4bdbd] pr-[15px] text-[28px] font-medium text-white">5</button>
              <span className="ml-[7px] pb-[5px]">rows per page</span>
            </div>
            <div className="ml-auto flex h-[71px] overflow-hidden rounded-[8px] border-2 border-[#e6e6ec] text-[28px]">
              {pages.map((page, i) => (
                <div
                  key={page.label}
                  className={`flex items-center justify-center ${page.w} ${page.label === '1' ? '-my-[2px] bg-[#b266ff] text-white' : ''} ${page.label === '...' ? 'text-[#9b9b9b]' : ''} ${i > 2 ? 'border-l-2 border-[#e6e6ec]' : ''}`}
                >
                  {page.label}
                </div>
              ))}
            </div>
          </div>
        </main>
        <footer className="mt-auto flex h-[162px] items-center justify-end border-t-2 border-[#dedede] bg-white pr-[32px] font-[Ubuntu,'Noto_Sans',sans-serif] text-[26px] tracking-[0.3px] text-[#616161]">
          <span>
            Droits d'auteur © 2026 <span className="text-[#166534]">Stunov - SaaS.</span> Tous droits réservés.
          </span>
        </footer>
      </div>
    </div>
  );
};

export default App;
